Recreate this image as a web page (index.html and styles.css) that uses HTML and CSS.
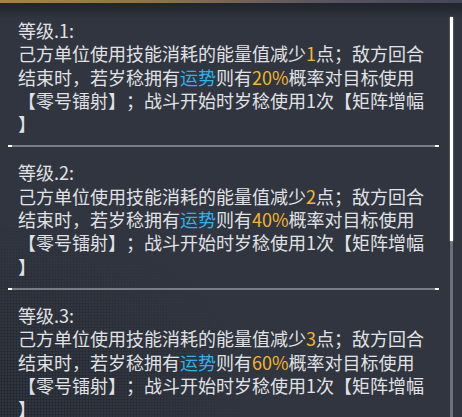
FILE: index.html
```html
<!DOCTYPE html>
<html lang="zh-CN">
<head>
<meta charset="utf-8">
<title>技能等级</title>
<link rel="stylesheet" href="styles.css">
</head>
<body>
<div class="frame-top"></div>
<div class="panel">
  <div class="levels">
    <section class="level">
      <p class="level-title">等级.1:</p>
      <p class="level-desc">己方单位使用技能消耗的能量值减少<span class="num">1</span>点；敌方回合结束时，若岁稔拥有<span class="key">运势</span>则有<span class="num">20%</span>概率对目标使用【零号镭射】；战斗开始时岁稔使用1次【矩阵增幅】</p>
    </section>
    <div class="divider"></div>
    <section class="level">
      <p class="level-title">等级.2:</p>
      <p class="level-desc">己方单位使用技能消耗的能量值减少<span class="num">2</span>点；敌方回合结束时，若岁稔拥有<span class="key">运势</span>则有<span class="num">40%</span>概率对目标使用【零号镭射】；战斗开始时岁稔使用1次【矩阵增幅】</p>
    </section>
    <div class="divider"></div>
    <section class="level">
      <p class="level-title">等级.3:</p>
      <p class="level-desc">己方单位使用技能消耗的能量值减少<span class="num">3</span>点；敌方回合结束时，若岁稔拥有<span class="key">运势</span>则有<span class="num">60%</span>概率对目标使用【零号镭射】；战斗开始时岁稔使用1次【矩阵增幅】</p>
    </section>
  </div>
  <div class="scrollbar"><div class="scroll-thumb"></div></div>
</div>
</body>
</html>
```

FILE: styles.css
```css
html, body {
  margin: 0;
  padding: 0;
}

body {
  width: 462px;
  height: 417px;
  overflow: hidden;
  background: #30353f;
  font-family: "Noto Sans CJK SC", "Noto Sans", sans-serif;
  color: #e1e2e5;
}

/* thin gilded edge of the frame above the panel */
.frame-top {
  height: 3px;
  background: linear-gradient(to right, #a98245 0%, #8f7248 35%, #5a5462 70%, #444659 100%);
}

.panel {
  position: relative;
  display: flex;
  align-items: flex-start;
  height: 414px;
  padding: 0 9px 0 8px;
  box-sizing: border-box;
  background: linear-gradient(to bottom, #20242c 0px, #262a33 7px, #30353f 15px);
}

/* halftone dots fading in the lower left corner */
.panel::before {
  content: "";
  position: absolute;
  left: 0;
  bottom: 0;
  width: 240px;
  height: 190px;
  pointer-events: none;
  background-image: radial-gradient(circle, rgba(14, 17, 22, 0.4) 0.9px, transparent 1.3px);
  background-size: 3px 3px;
  -webkit-mask-image: radial-gradient(ellipse at 0% 100%, #000 0%, rgba(0,0,0,0.5) 45%, transparent 75%);
  mask-image: radial-gradient(ellipse at 0% 100%, #000 0%, rgba(0,0,0,0.5) 45%, transparent 75%);
}

.levels {
  position: relative;
  width: 431px;
  flex: none;
}

.level {
  padding: 16px 11px 10px 10px;
}

.level + .divider + .level {
  padding-top: 14px;
}

.level p {
  margin: 0;
  font-size: 18px;
  line-height: 23.3px;
  line-break: anywhere;
  text-spacing-trim: space-all;
}

.num {
  color: #f3b62b;
}

.key {
  color: #2eb2ea;
}

.divider {
  height: 2px;
  background: linear-gradient(to right,
    #ffffff 0 4px,
    #777c85 4px calc(100% - 4px),
    #ffffff calc(100% - 4px) 100%);
}

.scrollbar {
  width: 3px;
  height: 400px;
  margin-left: 11px;
  margin-top: 14px;
  background: #6c717a;
  flex: none;
}

.scroll-thumb {
  height: 224px;
  background: #ffffff;
  box-shadow: 0 0 2px rgba(255, 255, 255, 0.55);
}
```
